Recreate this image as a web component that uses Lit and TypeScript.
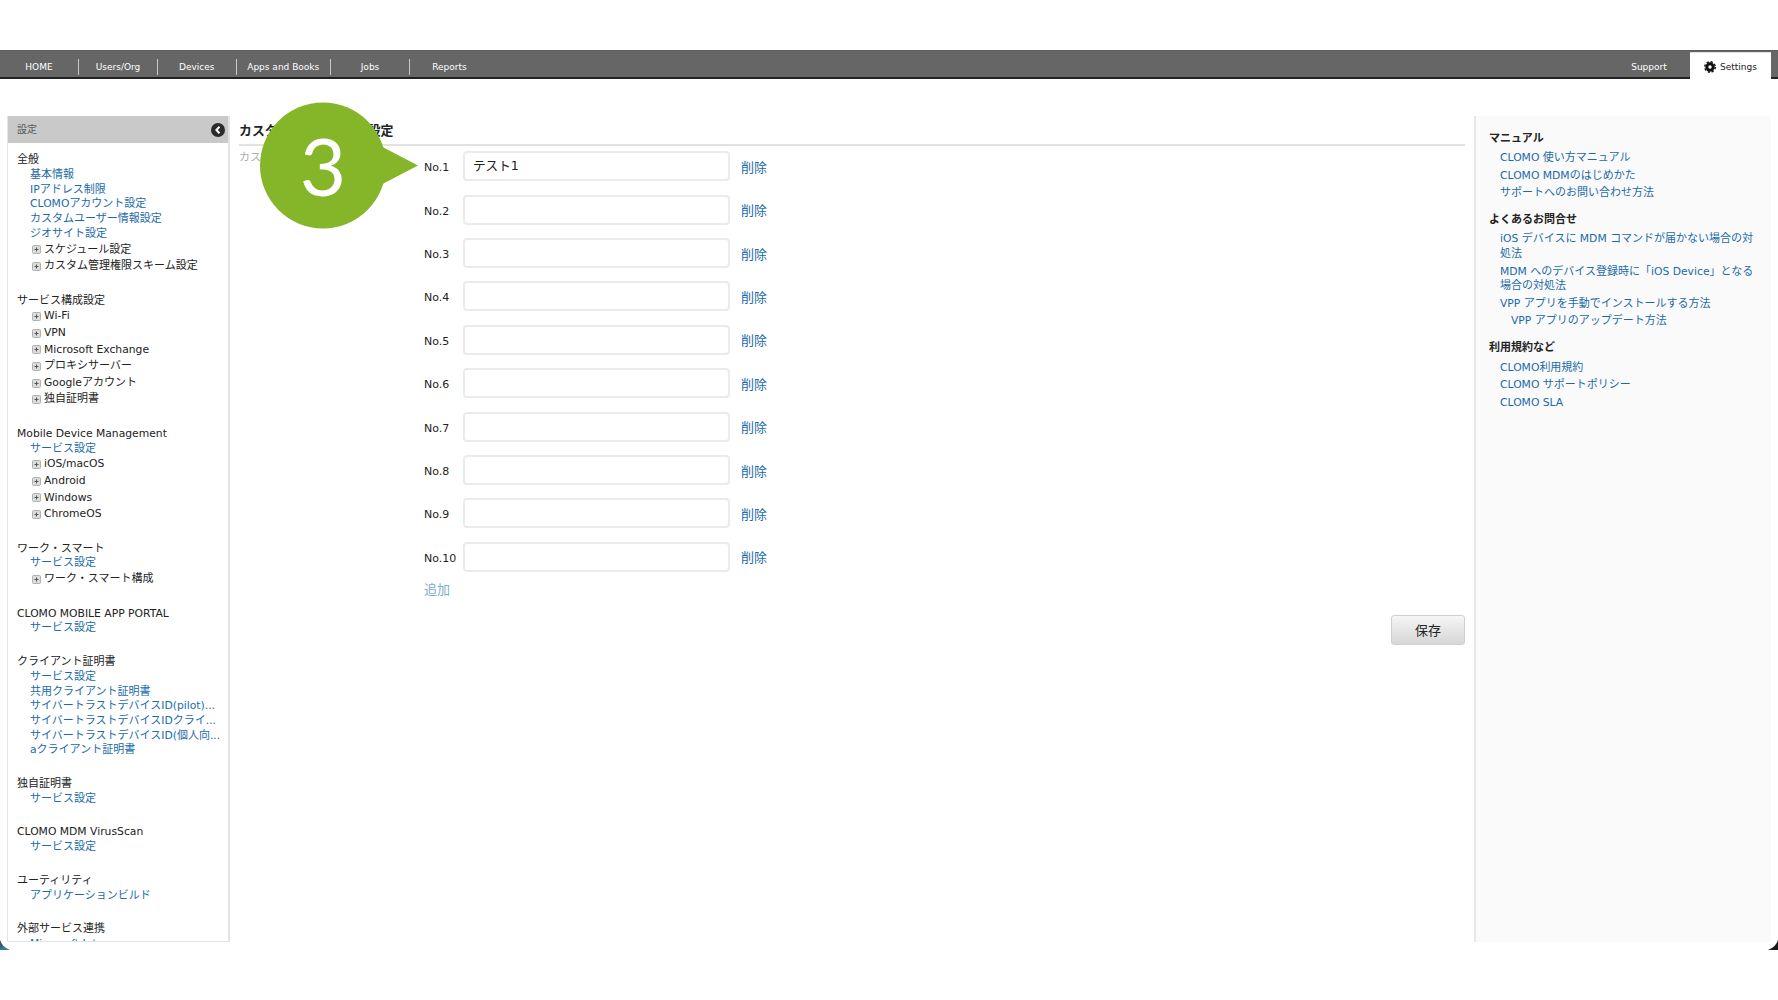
import { LitElement, html, css, svg } from "lit";
import { customElement } from "lit/decorators.js";

type Line = { t: string; k: "head" | "link" | "tree" };
const H = (t: string): Line => ({ t, k: "head" });
const L = (t: string): Line => ({ t, k: "link" });
const T = (t: string): Line => ({ t, k: "tree" });

const groups: Line[][] = [
  [H("全般"), L("基本情報"), L("IPアドレス制限"), L("CLOMOアカウント設定"), L("カスタムユーザー情報設定"), L("ジオサイト設定"), T("スケジュール設定"), T("カスタム管理権限スキーム設定")],
  [H("サービス構成設定"), T("Wi-Fi"), T("VPN"), T("Microsoft Exchange"), T("プロキシサーバー"), T("Googleアカウント"), T("独自証明書")],
  [H("Mobile Device Management"), L("サービス設定"), T("iOS/macOS"), T("Android"), T("Windows"), T("ChromeOS")],
  [H("ワーク・スマート"), L("サービス設定"), T("ワーク・スマート構成")],
  [H("CLOMO MOBILE APP PORTAL"), L("サービス設定")],
  [H("クライアント証明書"), L("サービス設定"), L("共用クライアント証明書"), L("サイバートラストデバイスID(pilot)..."), L("サイバートラストデバイスIDクライ..."), L("サイバートラストデバイスID(個人向..."), L("aクライアント証明書")],
  [H("独自証明書"), L("サービス設定")],
  [H("CLOMO MDM VirusScan"), L("サービス設定")],
  [H("ユーティリティ"), L("アプリケーションビルド")],
  [H("外部サービス連携"), L("Microsoft Intune")],
];

const nav: [string, number][] = [
  ["HOME", 79], ["Users/Org", 79], ["Devices", 78.5], ["Apps and Books", 94.5], ["Jobs", 79], ["Reports", 79],
];

const help: { h: string; links: { t: string; sub?: boolean }[] }[] = [
  { h: "マニュアル", links: [{ t: "CLOMO 使い方マニュアル" }, { t: "CLOMO MDMのはじめかた" }, { t: "サポートへのお問い合わせ方法" }] },
  { h: "よくあるお問合せ", links: [
    { t: "iOS デバイスに MDM コマンドが届かない場合の対処法" },
    { t: "MDM へのデバイス登録時に「iOS Device」となる場合の対処法" },
    { t: "VPP アプリを手動でインストールする方法" },
    { t: "VPP アプリのアップデート方法", sub: true },
  ] },
  { h: "利用規約など", links: [{ t: "CLOMO利用規約" }, { t: "CLOMO サポートポリシー" }, { t: "CLOMO SLA" }] },
];

/* Latin runs are set a touch smaller than the Japanese around them. */
const mixed = (s: string) =>
  s.split(/([\x00-\x7f]+)/).map((p, i) => (i % 2 ? html`<span class="lat">${p}</span>` : p));

const plus = svg`<svg class="plus" width="9" height="9" viewBox="0 0 9 9"><rect x="0.5" y="0.5" width="8" height="8" rx="1" fill="#dcdcdc" stroke="#b0b0b0"/><path d="M2.500 4.500h4M4.500 2.500v4" stroke="#555" stroke-width="1"/></svg>`;

const gear = svg`<svg class="gear" width="12" height="12" viewBox="0 0 12 12"><circle cx="6" cy="6" r="4.700" fill="#111"/><circle cx="6" cy="6" r="5.200" fill="none" stroke="#111" stroke-width="1.500" stroke-dasharray="2.200 1.880"/><circle cx="6" cy="6" r="1.700" fill="#fff"/></svg>`;

@customElement("app-root")
export class AppRoot extends LitElement {
  static styles = css`
    :host {
      display: block;
      width: 1778px;
      height: 1000px;
      background: #fff;
      position: relative;
      overflow: hidden;
      font-family: "DejaVu Sans", "Noto Sans CJK JP", sans-serif;
      font-size: 11px;
      color: #222;
    }
    .lat { font-size: 0.98em; }
    .page { display: flex; flex-direction: column; height: 942px; padding-top: 50px; box-sizing: border-box; }
    .nav {
      height: 29px;
      flex: none;
      box-sizing: border-box;
      background: #666;
      border-top: 1px solid #5c5c5c;
      border-bottom: 2px solid #222;
      display: flex;
      align-items: flex-end;
      padding-right: 7px;
      color: #fff;
      font-size: 9px;
    }
    .nav-item {
      height: 16px;
      margin-bottom: 2px;
      line-height: 16px;
      text-align: center;
      box-sizing: border-box;
      border-right: 1.500px solid #c9c9c9;
      flex: none;
    }
    .nav-item:nth-child(6) { border-right: 0; }
    .spacer { flex: 1; }
    .support { width: 78px; height: 16px; line-height: 16px; margin-bottom: 2px; text-align: center; margin-right: 2px; }
    .tab {
      width: 81px;
      height: 27px;
      margin-bottom: -2px;
      background: #fff;
      color: #222;
      box-sizing: border-box;
      border-top: 1px solid #ddd;
      display: flex;
      align-items: center;
      justify-content: center;
      gap: 4px;
      padding-top: 2px;
    }
    .gear { display: block; }
    .content { flex: 1; display: flex; min-height: 0; padding: 37px 7px 0; }
    .side {
      width: 223px;
      flex: none;
      box-sizing: border-box;
      border: 1px solid #e4e4e4;
      border-top: 0;
      border-right-width: 2px;
      overflow: hidden;
      display: flex;
      flex-direction: column;
    }
    .side-head {
      height: 27px;
      flex: none;
      background: #c9c9c9;
      color: #555;
      font-size: 10px;
      display: flex;
      align-items: center;
      justify-content: space-between;
      box-sizing: border-box;
      padding: 0 3px 2px 9px;
    }
    .side-head svg { margin-top: 2px; }
    .side-body { padding: 10.300px 0 0 9px; overflow: hidden; flex: 1; }
    .group { margin-bottom: 19px; }
    .head { line-height: 14.700px; white-space: nowrap; color: #222; }
    .link { line-height: 14.700px; white-space: nowrap; color: #1b6aa8; padding-left: 13px; }
    .tree { line-height: 16.600px; height: 16.600px; white-space: nowrap; color: #222; padding-left: 15px; display: flex; align-items: center; gap: 3px; }
    .plus { flex: none; }
    .main { flex: 1; min-width: 0; padding: 0 9px 0 9px; display: flex; flex-direction: column; }
    .title {
      font-size: 12.900px;
      font-weight: 700;
      color: #222;
      height: 30px;
      line-height: 29px;
      box-sizing: border-box;
      border-bottom: 2px solid #e2e2e2;
      flex: none;
    }
    .body { display: flex; padding-top: 5.300px; }
    .desc { width: 185px; flex: none; color: #aaa; font-size: 11px; line-height: 14px; white-space: nowrap; }
    .form { display: flex; flex-direction: column; }
    .rows { display: flex; flex-direction: column; gap: 13.400px; }
    .row { display: flex; align-items: center; height: 30px; }
    .no { width: 38.500px; flex: none; color: #222; font-size: 11px; padding-top: 3px; box-sizing: border-box; white-space: nowrap; }
    .box {
      width: 267px;
      height: 30px;
      box-sizing: border-box;
      border: 2px solid #ebebeb;
      border-radius: 4px;
      background: #fff;
      padding: 0 8.500px;
      font-size: 12.600px;
      line-height: 25px;
      color: #222;
    }
    .del { margin-left: 11.500px; font-size: 13px; color: #1b6aa8; }
    .add { margin-top: 10px; font-size: 13px; line-height: 15px; color: #7dabd2; }
    .actions { display: flex; justify-content: flex-end; margin-top: 18.500px; }
    .save {
      width: 74px;
      height: 30px;
      box-sizing: border-box;
      border: 1px solid #cfcfcf;
      border-radius: 3px;
      background: linear-gradient(#f6f6f6, #d6d6d6);
      font-size: 13px;
      color: #222;
      display: flex;
      align-items: center;
      justify-content: center;
      padding-bottom: 2px;
    }
    .right {
      width: 297px;
      flex: none;
      box-sizing: border-box;
      background: #fafafa;
      border-left: 2px solid #e8e8e8;
      padding: 16px 13px 0 13px;
    }
    .help-h { font-weight: 700; line-height: 14px; color: #222; }
    .help-list { margin: 3.800px 0 11px; padding-left: 11px; }
    .help-link { color: #1b6aa8; line-height: 14.700px; padding: 1.400px 0; }
    .help-link.sub { padding-left: 11px; }
    .bubble { position: absolute; left: 260px; top: 102px; width: 160px; height: 127px; }
    .three {
      position: absolute;
      left: 260px;
      top: 102px;
      width: 126px;
      height: 125px;
      display: flex;
      align-items: center;
      justify-content: center;
      color: #fff;
      font-family: "Lato", sans-serif;
      font-size: 80px;
      line-height: 1;
    }
    .corner { position: absolute; top: 940px; display: block; }
    .corner.l { left: 0; }
    .corner.r { right: 0; }
  `;

  render() {
    return html`
      <div class="page">
        <div class="nav">
          ${nav.map(([t, w]) => html`<div class="nav-item" style="width:${w}px">${t}</div>`)}
          <div class="spacer"></div>
          <div class="support">Support</div>
          <div class="tab">${gear}<span>Settings</span></div>
        </div>
        <div class="content">
          <aside class="side">
            <div class="side-head">
              <span>設定</span>
              <svg width="14" height="14" viewBox="0 0 14 14"><circle cx="7" cy="7" r="7" fill="#2b2b2b"/><path d="M8.500 3.800 5.400 7l3.100 3.200" fill="none" stroke="#fff" stroke-width="2"/></svg>
            </div>
            <div class="side-body">
              ${groups.map((g) => html`<div class="group">
                ${g.map((l) =>
                  l.k === "tree"
                    ? html`<div class="tree">${plus}<span>${mixed(l.t)}</span></div>`
                    : html`<div class=${l.k}>${mixed(l.t)}</div>`
                )}
              </div>`)}
            </div>
          </aside>
          <main class="main">
            <div class="title">カスタムユーザー情報設定</div>
            <div class="body">
              <div class="desc">カスタムユーザー情報の設定</div>
              <div class="form">
                <div class="rows">
                  ${Array.from({ length: 10 }, (_, i) => html`<div class="row">
                    <div class="no">No.${i + 1}</div>
                    <div class="box">${i === 0 ? "テスト1" : ""}</div>
                    <div class="del">削除</div>
                  </div>`)}
                </div>
                <div class="add">追加</div>
              </div>
            </div>
            <div class="actions"><div class="save">保存</div></div>
          </main>
          <aside class="right">
            ${help.map((s) => html`<div class="help-h">${s.h}</div>
              <div class="help-list">
                ${s.links.map((l) => html`<div class="help-link ${l.sub ? "sub" : ""}">${mixed(l.t)}</div>`)}
              </div>`)}
          </aside>
        </div>
      </div>
      <svg class="bubble" viewBox="0 0 160 127">
        <circle cx="63" cy="63.500" r="63" fill="#85b529"/>
        <path d="M110 38.500 158 63.500 110 88.500Z" fill="#85b529"/>
      </svg>
      <div class="three">3</div>
      <svg class="corner l" width="10" height="10" viewBox="0 0 10 10">
        <defs><linearGradient id="cl" x1="0" y1="0" x2="0" y2="1"><stop offset="0" stop-color="#1b3a4c"/><stop offset="1" stop-color="#3f7f9b"/></linearGradient></defs>
        <path d="M0 0Q2 7 10 10H0Z" fill="url(#cl)"/>
      </svg>
      <svg class="corner r" width="10" height="10" viewBox="0 0 10 10">
        <path d="M10 0Q8 7 0 10H10Z" fill="#1a1a1a"/>
      </svg>
    `;
  }
}
